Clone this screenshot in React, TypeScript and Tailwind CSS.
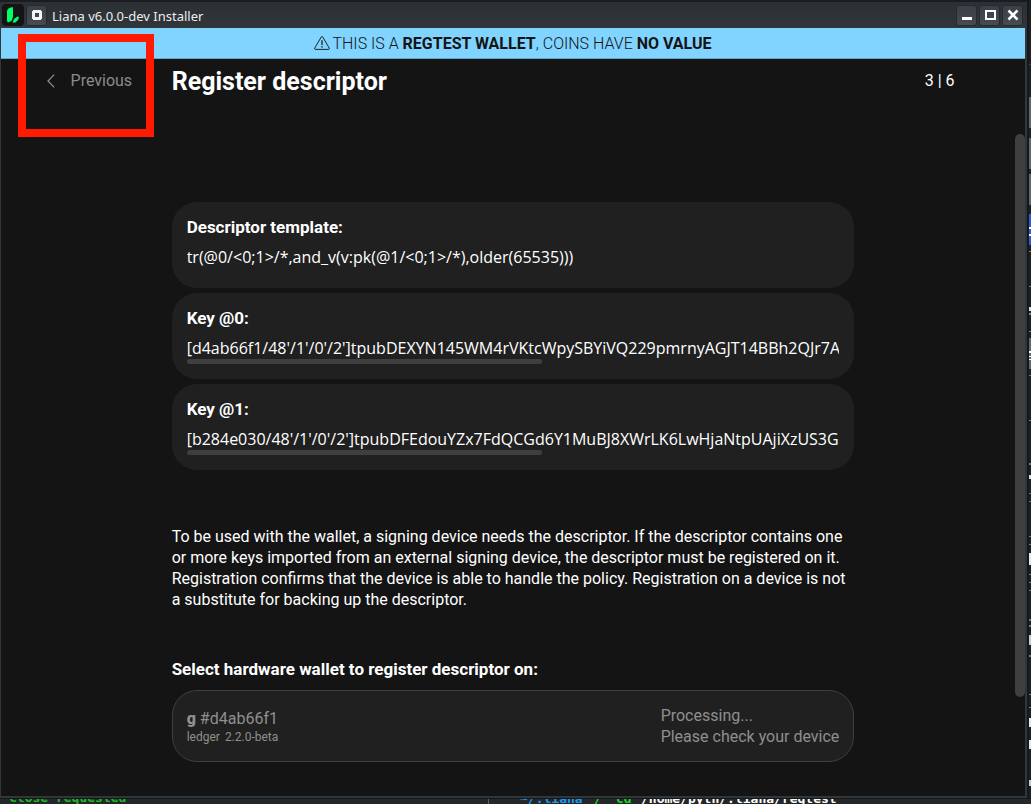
import type { ReactNode } from "react";

const keys = [
  { label: "Descriptor template:", value: "tr(@0/<0;1>/*,and_v(v:pk(@1/<0;1>/*),older(65535)))", scroll: false },
  { label: "Key @0:", value: "[d4ab66f1/48'/1'/0'/2']tpubDEXYN145WM4rVKtcWpySBYiVQ229pmrnyAGJT14BBh2QJr7A", scroll: true },
  { label: "Key @1:", value: "[b284e030/48'/1'/0'/2']tpubDFEdouYZx7FdQCGd6Y1MuBJ8XWrLK6LwHjaNtpUAjiXzUS3G", scroll: true },
];

function FrameButton({ label, children }: { label: string; children: ReactNode }) {
  return (
    <button
      type="button"
      aria-label={label}
      className="flex size-[21px] items-center justify-center rounded-[3px] border border-[#272b2f] bg-linear-to-b from-[#3b4046] to-[#464b54]"
    >
      {children}
    </button>
  );
}

function TitleBar() {
  return (
    <div className="flex h-7 items-center border-t-2 border-[#1b1c22] bg-linear-to-b from-[#2b3034] to-[#31363b] pr-1 pl-[2px]">
      <svg width="22" height="22" viewBox="0 0 22 22" aria-hidden="true">
        <rect width="22" height="22" rx="4" fill="#141414" />
        <path d="M5 6.5 L7 4 L11 3 L11 13 L9.5 17 L6 18.5 L5 17 Z" fill="#00ff66" />
        <path d="M10.5 18.5 L12 15 L15.5 12.5 L17 13 L16 16 L13.5 18.5 Z" fill="#00ff66" />
      </svg>
      <div className="ml-[2px]">
        <FrameButton label="Window options">
          <svg width="12" height="12" viewBox="0 0 12 12">
            <path d="M2 1 H10 V2 H11 V10 H10 V11 H2 V10 H1 V2 H2 Z M4 4 V8 H8 V4 Z" fill="#f6f6f6" fillRule="evenodd" />
          </svg>
        </FrameButton>
      </div>
      <span className="ml-[5px] flex-1 pt-px font-['Noto_Sans',sans-serif] text-[13px] leading-5 text-[#eceded]">
        Liana v6.0.0-dev Installer
      </span>
      <div className="flex gap-[2px]">
        <FrameButton label="Minimize">
          <svg width="12" height="12" viewBox="0 0 12 12"><rect x="1" y="8" width="10" height="3" fill="#fff" /></svg>
        </FrameButton>
        <FrameButton label="Maximize">
          <svg width="12" height="12" viewBox="0 0 12 12"><rect x="2" y="2" width="9" height="8" fill="none" stroke="#fff" strokeWidth="2" /></svg>
        </FrameButton>
        <FrameButton label="Close">
          <svg width="12" height="12" viewBox="0 0 12 12"><path d="M1.5 1.5 L10.5 10.5 M10.5 1.5 L1.5 10.5" stroke="#fff" strokeWidth="2.6" /></svg>
        </FrameButton>
      </div>
    </div>
  );
}

function Banner() {
  return (
    <div className="flex h-[31px] items-center justify-center gap-[2px] border-b border-[#66a6c6] bg-[#80d4ff] text-[16px] leading-[21px] font-light text-[#141414]">
      <svg width="16" height="16" viewBox="0 0 16 16" fill="none" stroke="#141414" aria-hidden="true">
        <path d="M7.3 1.9 L0.7 13.2 Q0.4 14.3 1.2 14.4 L14.8 14.4 Q15.6 14.3 15.3 13.2 L8.7 1.9 Q8 1 7.3 1.9 Z" strokeWidth="0.9" />
        <path d="M8 5.2 V10" strokeWidth="1.2" />
        <path d="M8 11.2 V12.6" strokeWidth="1.4" />
      </svg>
      <p>
        THIS IS A <b className="font-bold">REGTEST WALLET</b>, COINS HAVE <b className="font-bold">NO VALUE</b>
      </p>
    </div>
  );
}

function ValueCard({ label, value, scroll }: { label: string; value: string; scroll: boolean }) {
  return (
    <section className="rounded-[25px] bg-[#202020] p-[15px]">
      <h2 className="text-[17px] leading-[21px] font-bold">{label}</h2>
      <p className="mt-[9px] overflow-hidden font-['Open_Sans',sans-serif] text-[16px] leading-[21px] whitespace-nowrap">
        {value}
      </p>
      <div className="h-[5px]">{scroll && <div className="h-[5px] w-[54.4%] rounded-full bg-[#3f3f3f]" />}</div>
    </section>
  );
}

const neighbourBlocks: [number, number, string][] = [
  [64, 1, "#3b3f44"], [97, 31, "#666666"], [138, 31, "#666666"], [174, 31, "#666666"],
  [214, 31, "#2e59d9"], [227, 2, "#ffffff"], [234, 2, "#ffffff"],
  [251, 1, "#777777"], [286, 1, "#777777"], [307, 4, "#dddddd"], [313, 2, "#888888"],
  [331, 1, "#777777"], [338, 31, "#666666"], [351, 2, "#ffffff"], [356, 1, "#ffffff"], [359, 1, "#ffffff"],
  [375, 1, "#777777"], [420, 1, "#777777"], [463, 2, "#777777"], [475, 4, "#dddddd"],
  [493, 1, "#777777"], [501, 1, "#777777"], [536, 1, "#777777"], [544, 1, "#777777"],
  [553, 12, "#e8e8e8"], [574, 1, "#777777"], [582, 1, "#777777"], [590, 1, "#777777"],
  [619, 2, "#777777"], [625, 2, "#777777"], [635, 10, "#cccccc"], [655, 2, "#777777"],
  [694, 1, "#777777"], [707, 1, "#777777"], [718, 9, "#e8e8e8"], [740, 9, "#e8e8e8"], [780, 6, "#cccccc"],
];

export default function App() {
  return (
    <div className="relative flex h-screen flex-col overflow-hidden bg-[#1d1f23] font-['Roboto',sans-serif] text-white">
      <div className="flex min-h-0 flex-1">
        <div className="flex min-w-0 flex-1 flex-col bg-[#31363b]">
          <TitleBar />
          <div className="mr-[2px] mb-[2px] ml-px flex min-h-0 flex-1 flex-col bg-[#141414]">
            <Banner />
            <header className="grid h-[75px] grid-cols-[1fr_4fr_1fr] items-start">
              <div className="flex justify-center pt-[11px] pl-[6px]">
                <button type="button" className="flex items-center gap-4 text-[16px] leading-[21px] text-[#8b8b8b]">
                  <svg width="8" height="14" viewBox="0 0 8 14" fill="none" stroke="currentColor" strokeWidth="1.3" aria-hidden="true">
                    <path d="M7.2 0.6 L1 7 L7.2 13.4" />
                  </svg>
                  Previous
                </button>
              </div>
              <h1 className="pt-2 text-[25px] leading-[30px] font-bold">Register descriptor</h1>
              <p className="pt-[11px] text-center text-[16px] leading-[21px]">3 | 6</p>
            </header>
            <main className="relative grid min-h-0 flex-1 grid-cols-[1fr_4fr_1fr] overflow-hidden">
              <div className="col-start-2 min-w-0 pt-[68px]">
                <div className="flex flex-col gap-[5px]">
                  {keys.map((k) => (
                    <ValueCard key={k.label} {...k} />
                  ))}
                </div>
                <p className="mt-14 text-[16px] leading-[21px]">
                  To be used with the wallet, a signing device needs the descriptor. If the descriptor contains one or
                  more keys imported from an external signing device, the descriptor must be registered on it.
                  Registration confirms that the device is able to handle the policy. Registration on a device is not a
                  substitute for backing up the descriptor.
                </p>
                <h2 className="mt-[49px] text-[17px] leading-[21px] font-bold">
                  Select hardware wallet to register descriptor on:
                </h2>
                <button
                  type="button"
                  className="mt-[10px] flex h-[72px] w-full items-center justify-between rounded-[25px] border border-[#3f3f3f] bg-[#202020] px-[14px] text-left text-[16px] leading-[21px] text-[#8f8f8f]"
                >
                  <span className="flex flex-col">
                    <span>
                      <b className="font-black">g</b> #d4ab66f1
                    </span>
                    <span className="flex gap-[5px] text-[12px] leading-4">
                      <span>ledger</span>
                      <span>2.2.0-beta</span>
                    </span>
                  </span>
                  <span className="flex flex-col">
                    <span>Processing...</span>
                    <span>Please check your device</span>
                  </span>
                </button>
              </div>
              <div className="absolute top-0 right-0 h-[85%] w-[10px] rounded-full bg-[#3f3f3f]" />
            </main>
          </div>
        </div>
        <div className="w-[2px] bg-[#16181c]" />
        <svg className="h-full w-[2px]" aria-hidden="true">
          {neighbourBlocks.map(([y, h, fill]) => (
            <rect key={y} x="0" y={y} width="2" height={h} fill={fill} />
          ))}
        </svg>
      </div>
      <div className="flex h-[6px] items-end overflow-hidden border-t border-[#15181a] bg-[#23272a] pl-[9px] font-['DejaVu_Sans_Mono',monospace] text-[13px] font-bold whitespace-pre">
        <span className="w-[479px] leading-3 text-[#1cbf1c]">Close requested</span>
        <span className="w-[32px] border-l border-[#5c6063] leading-[10px]"> </span>
        <span className="w-[74px] leading-[10px] text-[#1d99f3]">~/.liana</span>
        <span className="w-[22px] leading-[10px] text-[#1cdc1c]">/</span>
        <span className="w-[25px] leading-[10px] text-[#1cdc1c]">cd</span>
        <span className="leading-[10px]">/home/pyth/.liana/regtest</span>
      </div>
      <div className="pointer-events-none absolute top-[34px] left-[18px] h-[103px] w-[136px] border-8 border-[#ff1a00]" />
    </div>
  );
}
